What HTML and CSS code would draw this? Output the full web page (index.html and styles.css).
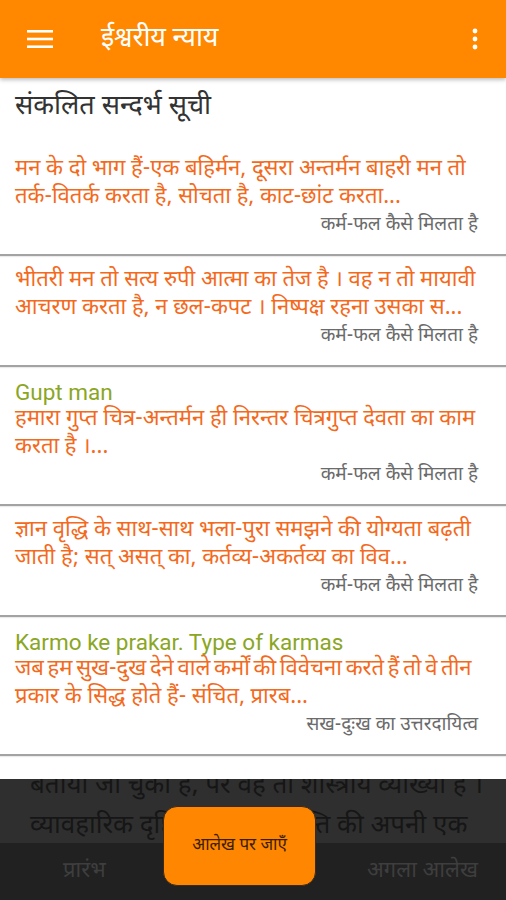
FILE: index.html
```html
<!DOCTYPE html>
<html lang="hi">
<head>
<meta charset="utf-8">
<title>ईश्वरीय न्याय</title>
<link rel="stylesheet" href="styles.css">
</head>
<body>
<div class="app">
  <header class="toolbar">
    <svg class="menu-icon" width="26" height="20" viewBox="0 0 26 20"><rect x="0" y="1" width="26" height="2.6" fill="#fff"/><rect x="0" y="8.7" width="26" height="2.6" fill="#fff"/><rect x="0" y="16.4" width="26" height="2.6" fill="#fff"/></svg>
    <h1 class="toolbar-title">ईश्वरीय न्याय</h1>
    <svg class="more-icon" width="6" height="24" viewBox="0 0 6 24"><circle cx="3" cy="4" r="2.4" fill="#fff"/><circle cx="3" cy="12" r="2.4" fill="#fff"/><circle cx="3" cy="20" r="2.4" fill="#fff"/></svg>
  </header>

  <main class="content">
    <h2 class="section-title">संकलित सन्दर्भ सूची</h2>
    <ul class="list">
      <li class="item">
        <p class="body">मन के दो भाग हैं-एक बहिर्मन, दूसरा अन्तर्मन बाहरी मन तो<br>तर्क-वितर्क करता है, सोचता है, काट-छांट करता...</p>
        <p class="meta">कर्म-फल कैसे मिलता है</p>
      </li>
      <li class="item">
        <p class="body">भीतरी मन तो सत्य रुपी आत्मा का तेज है । वह न तो मायावी<br>आचरण करता है, न छल-कपट । निष्पक्ष रहना उसका स...</p>
        <p class="meta">कर्म-फल कैसे मिलता है</p>
      </li>
      <li class="item">
        <p class="heading">Gupt man</p>
        <p class="body">हमारा गुप्त चित्र-अन्तर्मन ही निरन्तर चित्रगुप्त देवता का काम<br>करता है ।...</p>
        <p class="meta">कर्म-फल कैसे मिलता है</p>
      </li>
      <li class="item">
        <p class="body">ज्ञान वृद्धि के साथ-साथ भला-पुरा समझने की योग्यता बढ़ती<br>जाती है; सत् असत् का, कर्तव्य-अकर्तव्य का विव...</p>
        <p class="meta">कर्म-फल कैसे मिलता है</p>
      </li>
      <li class="item">
        <p class="heading">Karmo ke prakar. Type of karmas</p>
        <p class="body"><span class="tight">जब हम सुख-दुख देने वाले कर्मों की विवेचना करते हैं तो वे तीन</span><br>प्रकार के सिद्ध होते हैं- संचित, प्रारब...</p>
        <p class="meta">सख-दुःख का उत्तरदायित्व</p>
      </li>
    </ul>
  </main>

  <div class="reader">
    <div class="reader-text">
      <p>बताया जा चुका है, पर वह तो शास्त्रीय व्याख्या है ।</p>
      <p>व्यावहारिक दृष्टि से प्रत्येक व्यक्ति की अपनी एक</p>
    </div>
    <nav class="reader-nav">
      <span class="nav-link">प्रारंभ</span>
      <span class="nav-link">अगला आलेख</span>
    </nav>
    <button class="goto-btn">आलेख पर जाएँ</button>
  </div>
</div>
</body>
</html>
```

FILE: styles.css
```css
* { box-sizing: border-box; }
html, body { margin: 0; padding: 0; }
body {
  font-family: "Noto Sans Devanagari", "Noto Sans", "Roboto", sans-serif;
  background: #fff;
  width: 506px;
  height: 900px;
  overflow: hidden;
}
.app {
  position: relative;
  width: 506px;
  height: 900px;
  overflow: hidden;
}
.toolbar {
  height: 78px;
  background: #ff8800;
  display: flex;
  align-items: center;
  padding: 0 28px 0 27px;
  box-shadow: 0 2px 4px rgba(0,0,0,0.25);
  position: relative;
  z-index: 2;
}
.menu-icon { flex: none; }
.toolbar-title {
  margin: 0 0 0 48px;
  flex: 1;
  color: #fff;
  font-size: 27px;
  font-weight: 400;
  line-height: 1;
  letter-spacing: -0.2px;
}
.more-icon { flex: none; }
.section-title {
  margin: 0;
  padding: 12px 15px 19px;
  font-size: 27px;
  line-height: 36px;
  font-weight: 400;
  color: #333;
}
.list { list-style: none; margin: 0; padding: 0; }
.item {
  padding: 11px 0 14px 15px;
  border-bottom: 2px solid #a3a3a3;
  box-shadow: 0 1px 1px rgba(0,0,0,0.08);
}
.item p { margin: 0; }
.heading {
  color: #8aa624;
  font-family: "Roboto", "Noto Sans", sans-serif;
  font-size: 22.5px;
  line-height: 28px;
}
.body {
  color: #f36a1d;
  font-size: 22px;
  line-height: 28px;
  white-space: nowrap;
}
.tight { word-spacing: -2px; }
.meta {
  color: #6b6b6b;
  font-size: 19px;
  line-height: 28px;
  text-align: right;
  padding-right: 28px;
}
.reader {
  position: absolute;
  left: 0; right: 0; bottom: 0;
  height: 121px;
}
.reader-text {
  height: 64px;
  background: #2f2f2f;
  color: #161616;
  font-size: 26px;
  line-height: 40px;
  padding: 0 20px 0 30px;
  overflow: hidden;
}
.reader-text p { margin: 0; white-space: nowrap; position: relative; top: -12px; }
.reader-nav {
  height: 57px;
  background: #212121;
  display: flex;
  justify-content: space-between;
  align-items: center;
  padding: 0 28px 0 63px;
}
.nav-link {
  color: #3e3e3e;
  font-size: 22px;
}
.goto-btn {
  position: absolute;
  left: 163px;
  top: 27px;
  width: 153px;
  height: 80px;
  border-radius: 14px;
  background: #ff8600;
  border: 1px solid #3a2a1a;
  color: #3b1d00;
  font-family: "Noto Sans Devanagari", "Noto Sans", sans-serif;
  font-size: 17px;
  padding: 0;
}
```
